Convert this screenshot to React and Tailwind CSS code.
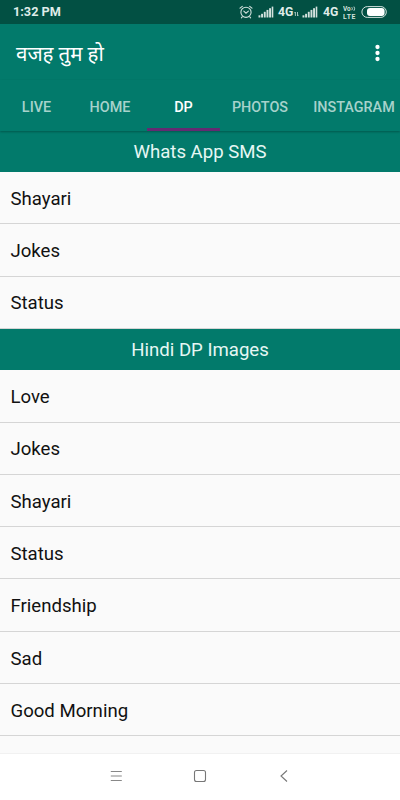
const tabs = [
  { label: "LIVE", width: "w-[73px]" },
  { label: "HOME", width: "w-[74px]" },
  { label: "DP", width: "w-[73px]", active: true },
  { label: "PHOTOS", width: "w-[80px]" },
  { label: "INSTAGRAM", width: "w-[108px]" },
];

const sections = [
  { title: "Whats App SMS", items: ["Shayari", "Jokes", "Status"] },
  {
    title: "Hindi DP Images",
    items: ["Love", "Jokes", "Shayari", "Status", "Friendship", "Sad", "Good Morning"],
  },
];

function AlarmIcon() {
  return (
    <svg width="14" height="14" viewBox="0 0 14 14" fill="none" stroke="#d3e2de" strokeLinecap="round">
      <circle cx="7" cy="7.3" r="5.1" strokeWidth="1.1" />
      <path d="M1 3.2 3.3 1.3M13 3.2 10.7 1.3M3.2 11.8 2.4 12.8M10.8 11.8 11.6 12.8" strokeWidth="1.1" />
      <path d="M4.8 6.2 7 8.2 9.4 6.2" strokeWidth="1.1" />
    </svg>
  );
}

function SignalIcon() {
  return (
    <svg width="16" height="12" viewBox="0 0 16 12" fill="#d3e2de">
      <rect x="0.5" y="9.3" width="1.9" height="2.2" />
      <rect x="3.1" y="7.8" width="1.9" height="3.7" />
      <rect x="5.8" y="5.8" width="1.9" height="5.7" />
      <rect x="8.5" y="3.9" width="1.9" height="7.6" />
      <rect x="11.1" y="2.2" width="1.9" height="9.3" />
      <rect x="13.7" y="0.6" width="1.6" height="10.9" />
    </svg>
  );
}

function VolteBadge() {
  return (
    <svg className="shrink-0" width="14" height="15" viewBox="0 0 14 15" fill="#d3e2de">
      <text x="0" y="6" fontSize="6.4" fontWeight="700">Vo</text>
      <path d="M8.8 2.2q1.1 1.5 0 3M10.9 1.6q1.5 2.1 0 4.2" fill="none" stroke="#d3e2de" strokeWidth="0.9" />
      <text x="0" y="13.6" fontSize="6.8" fontWeight="700" textLength="12.4">LTE</text>
    </svg>
  );
}

function StatusBar() {
  return (
    <div className="flex h-6 shrink-0 items-center bg-[#025043] pl-[13px] text-[#dfece9]">
      <span className="w-[226px] shrink-0 text-[12.7px] leading-none font-bold whitespace-nowrap">1:32 PM</span>
      <AlarmIcon />
      <span className="ml-[5px]"><SignalIcon /></span>
      <span className="ml-1 w-[16px] text-[12.2px] leading-none font-bold">4G</span>
      <svg className="mt-[4px]" width="5" height="6" viewBox="0 0 5 6" fill="none" stroke="#b5cec8" strokeWidth="0.9">
        <path d="M1.4 5V1L.3 2.2M3.5 1v4l1.1-1.2" />
      </svg>
      <span className="ml-[3px]"><SignalIcon /></span>
      <span className="ml-[5px] w-5 text-[12.2px] leading-none font-bold">4G</span>
      <VolteBadge />
      <svg className="ml-1 shrink-0" width="26" height="12" viewBox="0 0 26 12">
        <rect x="0.9" y="0.6" width="24.4" height="10.8" rx="5.4" fill="none" stroke="#d3e2de" strokeWidth="1" />
        <rect x="6" y="2" width="17.6" height="8" rx="3" fill="#fff" />
      </svg>
    </div>
  );
}

function AppBar() {
  return (
    <div className="flex h-14 shrink-0 items-center justify-between bg-[#027a6b] pr-5 pl-4">
      <h1 className="mt-1 text-[20.5px] leading-none text-white">वजह तुम हो</h1>
      <svg width="5" height="18" viewBox="0 0 5 18" fill="#fff" className="mt-[2px]">
        <circle cx="2.5" cy="3" r="2.15" />
        <circle cx="2.5" cy="9" r="2.15" />
        <circle cx="2.5" cy="15" r="2.15" />
      </svg>
    </div>
  );
}

function TabBar() {
  return (
    <div className="relative z-10 flex h-[51px] shrink-0 bg-[#027a6b] shadow-[0_1px_2px_rgba(0,0,0,0.28)]">
      {tabs.map((tab) => (
        <div
          key={tab.label}
          className={`${tab.width} flex shrink-0 items-center justify-center border-b-[3px] pt-[7px] text-[14.4px] font-medium ${
            tab.active ? "border-[#642b72] text-white" : "border-transparent text-[#a7d2cb]"
          }`}
        >
          {tab.label}
        </div>
      ))}
    </div>
  );
}

function Section({ title, items }) {
  return (
    <section>
      <h2 className="flex h-[41.5px] items-center justify-center bg-[#027a6b] pt-[2.6px] text-[18.6px] text-[#e6f7f4]">
        {title}
      </h2>
      <ul>
        {items.map((item) => (
          <li
            key={item}
            className="flex h-[52.3px] items-center border-b border-[#d5d5d5] pt-[4.4px] pl-[10.5px] text-[18.6px] text-[#111]"
          >
            {item}
          </li>
        ))}
      </ul>
    </section>
  );
}

function NavBar() {
  return (
    <div className="flex h-[47px] shrink-0 items-center justify-center border-t border-[#f1f1f1] bg-white pb-[2px]">
      <svg width="14" height="14" viewBox="0 0 14 14" stroke="#888" strokeWidth="1.1">
        <path d="M1.8 2.5h11M1.8 7h11M1.8 11.5h11" />
      </svg>
      <svg className="mx-[70px]" width="14" height="14" viewBox="0 0 14 14" fill="none" stroke="#777" strokeWidth="1.1">
        <rect x="1.5" y="1.5" width="11" height="11" rx="2" />
      </svg>
      <svg width="14" height="14" viewBox="0 0 14 14" fill="none" stroke="#777" strokeWidth="1.1">
        <path d="M10 1.5 4 7l6 5.5" />
      </svg>
    </div>
  );
}

export default function App() {
  return (
    <div className="flex h-[800px] w-[400px] flex-col overflow-hidden bg-[#fafafa] font-['Roboto','Noto_Sans',sans-serif]">
      <StatusBar />
      <AppBar />
      <TabBar />
      <main className="-mt-[0.6px] flex-1 overflow-hidden">
        {sections.map((section) => (
          <Section key={section.title} {...section} />
        ))}
      </main>
      <NavBar />
    </div>
  );
}
